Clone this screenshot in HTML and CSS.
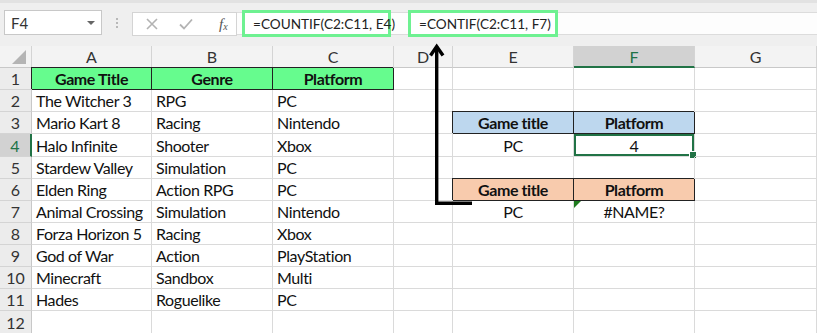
FILE: index.html
```html
<!DOCTYPE html>
<html>
<head>
<meta charset="utf-8">
<link rel="stylesheet" href="styles.css">
</head>
<body>
<div class="app">
  <div class="toolbar">
    <div class="namebox"><span class="nb-text">F4</span><span class="caret"></span></div>
    <div class="dots"><span></span><span></span><span></span></div>
    <div class="fxbox">
      <svg class="ic" width="14" height="14" viewBox="0 0 14 14"><path d="M2 2 L12 12 M12 2 L2 12" stroke="#b3b3b3" stroke-width="1.6" fill="none"/></svg>
      <svg class="ic" width="16" height="14" viewBox="0 0 16 14"><path d="M2 7.5 L6 11.5 L14 2.5" stroke="#b3b3b3" stroke-width="1.8" fill="none"/></svg>
      <span class="fx">f<sub>x</sub></span>
    </div>
    <div class="formula">
      <div class="hl">=COUNTIF(C2:C11, E4)</div>
      <div class="hl hl2">=CONTIF(C2:C11, F7)</div>
    </div>
  </div>

  <div class="sheet">
    <div class="h corner"><svg width="14" height="14" viewBox="0 0 14 14"><polygon points="14,0 14,14 0,14" fill="#b4b4b4"/></svg></div>
    <div class="h">A</div><div class="h">B</div><div class="h">C</div><div class="h">D</div><div class="h">E</div><div class="h hsel">F</div><div class="h">G</div>

    <div class="r">1</div>
    <div class="c b ctr hd-green bx">Game Title</div><div class="c b ctr hd-green bx">Genre</div><div class="c b ctr hd-green bx">Platform</div><div class="c"></div><div class="c"></div><div class="c"></div><div class="c"></div>

    <div class="r">2</div>
    <div class="c">The Witcher 3</div><div class="c">RPG</div><div class="c">PC</div><div class="c"></div><div class="c"></div><div class="c"></div><div class="c"></div>

    <div class="r">3</div>
    <div class="c">Mario Kart 8</div><div class="c">Racing</div><div class="c">Nintendo</div><div class="c"></div><div class="c b ctr hd-blue bx">Game title</div><div class="c b ctr hd-blue bx">Platform</div><div class="c"></div>

    <div class="r rsel">4</div>
    <div class="c">Halo Infinite</div><div class="c">Shooter</div><div class="c">Xbox</div><div class="c"></div><div class="c ctr">PC</div><div class="c ctr sel">4</div><div class="c"></div>

    <div class="r">5</div>
    <div class="c">Stardew Valley</div><div class="c">Simulation</div><div class="c">PC</div><div class="c"></div><div class="c"></div><div class="c"></div><div class="c"></div>

    <div class="r">6</div>
    <div class="c">Elden Ring</div><div class="c">Action RPG</div><div class="c">PC</div><div class="c"></div><div class="c b ctr hd-orange bx">Game title</div><div class="c b ctr hd-orange bx">Platform</div><div class="c"></div>

    <div class="r">7</div>
    <div class="c">Animal Crossing</div><div class="c">Simulation</div><div class="c">Nintendo</div><div class="c"></div><div class="c ctr">PC</div><div class="c ctr err">#NAME?</div><div class="c"></div>

    <div class="r">8</div>
    <div class="c">Forza Horizon 5</div><div class="c">Racing</div><div class="c">Xbox</div><div class="c"></div><div class="c"></div><div class="c"></div><div class="c"></div>

    <div class="r">9</div>
    <div class="c">God of War</div><div class="c">Action</div><div class="c">PlayStation</div><div class="c"></div><div class="c"></div><div class="c"></div><div class="c"></div>

    <div class="r">10</div>
    <div class="c">Minecraft</div><div class="c">Sandbox</div><div class="c">Multi</div><div class="c"></div><div class="c"></div><div class="c"></div><div class="c"></div>

    <div class="r">11</div>
    <div class="c">Hades</div><div class="c">Roguelike</div><div class="c">PC</div><div class="c"></div><div class="c"></div><div class="c"></div><div class="c"></div>

    <div class="r">12</div>
    <div class="c"></div><div class="c"></div><div class="c"></div><div class="c"></div><div class="c"></div><div class="c"></div><div class="c"></div>
  </div>

  <svg class="arrow" width="817" height="333" viewBox="0 0 817 333">
    <path d="M436.7 205 V46.5" stroke="#000" stroke-width="3.4" fill="none"/>
    <path d="M430.5 55.5 L436.7 46.5 L443 55.5" stroke="#000" stroke-width="3.4" fill="none" stroke-linejoin="miter"/>
    <path d="M435 203.3 H472" stroke="#000" stroke-width="3.4" fill="none"/>
  </svg>
</div>
</body>
</html>
```

FILE: styles.css
```css
* { box-sizing: border-box; }
html, body { margin: 0; padding: 0; }
body { width: 817px; height: 333px; overflow: hidden; background: #fff; font-family: Lato, "Open Sans", sans-serif; }

.app { position: relative; width: 817px; height: 333px; overflow: hidden; }

.toolbar {
  height: 46px;
  background: #efefef;
  border-top: 3px solid #e2e2e2;
  display: flex;
  align-items: flex-start;
  padding-top: 7px;
}
.namebox {
  margin-left: 4px;
  width: 98px;
  height: 25px;
  background: #fff;
  border: 1px solid #c8c8c8;
  display: flex;
  align-items: center;
  justify-content: space-between;
  padding: 0 6px 0 6px;
  font-size: 15px;
  color: #333;
}
.caret {
  width: 0; height: 0;
  border-left: 4px solid transparent;
  border-right: 4px solid transparent;
  border-top: 4px solid #666;
}
.dots {
  width: 30px;
  height: 25px;
  display: flex;
  flex-direction: column;
  align-items: center;
  justify-content: center;
  gap: 2px;
}
.dots span { width: 2px; height: 2px; background: #b8b8b8; display: block; }
.fxbox {
  margin-top: 2px;
  width: 105px;
  height: 24px;
  background: #fff;
  border: 1px solid #d4d4d4;
  display: flex;
  align-items: center;
  padding-left: 12px;
  gap: 19px;
}
.fx { font-family: "Liberation Serif", serif; font-style: italic; font-size: 15px; color: #555; margin-left: 6px; }
.fx sub { font-size: 10px; vertical-align: -1px; }
.formula {
  margin-top: 2px;
  flex: 1;
  height: 23px;
  background: #fdfdfd;
  border-top: 1px solid #dcdcdc;
  border-bottom: 1px solid #dcdcdc;
  display: flex;
  align-items: center;
  padding-left: 5px;
}
.hl {
  width: 149px;
  height: 27px;
  flex: none;
  border: 3px solid #6ef191;
  background: #fff;
  font-size: 13.6px;
  color: #222;
  padding-left: 8px;
  display: flex;
  align-items: center;
  white-space: nowrap;
}
.hl2 { margin-left: 17px; width: 150px; }

.sheet {
  display: grid;
  grid-template-columns: 32px 120px 121px 121px 59px 121px 121px 122px;
  grid-template-rows: 22px repeat(12, 22.13px);
}
.h {
  background: #f3f3f3;
  border-right: 1px solid #d4d4d4;
  border-bottom: 1px solid #c8c8c8;
  display: flex;
  align-items: center;
  justify-content: center;
  font-size: 16px;
  color: #333;
}
.corner { justify-content: flex-end; align-items: flex-end; padding: 0 5px 3px 0; }
.hsel { background: #d2d2d2; border-bottom: 2px solid #217346; color: #217346; }
.r {
  background: #ececec;
  border-right: 1px solid #c8c8c8;
  border-bottom: 1px solid #d4d4d4;
  display: flex;
  align-items: flex-end;
  justify-content: center;
  font-size: 16px;
  line-height: 20px;
  color: #333;
}
.rsel { background: #d2d2d2; border-right: 2px solid #217346; color: #217346; }
.c {
  position: relative;
  border-right: 1px solid #dadada;
  border-bottom: 1px solid #dadada;
  display: flex;
  align-items: flex-end;
  padding: 0 4px;
  font-size: 16px;
  letter-spacing: -0.4px;
  line-height: 20px;
  color: #111;
  white-space: nowrap;
}
.ctr { justify-content: center; }
.b { font-weight: bold; }
.bx { border-right-color: #222; border-bottom-color: #222; box-shadow: -1px -1px 0 #222; }
.hd-green { background: #66fc8e; }
.hd-blue { background: #bdd7ee; }
.hd-orange { background: #f8cbad; }
.sel { box-shadow: inset 0 0 0 2px #217346; }
.sel::after {
  content: "";
  position: absolute;
  right: -3px;
  bottom: -3px;
  width: 6px;
  height: 6px;
  background: #217346;
  border: 1px solid #fff;
}
.err::before {
  content: "";
  position: absolute;
  left: 0;
  top: 0;
  border-top: 7px solid #1e7b1e;
  border-right: 7px solid transparent;
}

.arrow { position: absolute; left: 0; top: 0; pointer-events: none; }
```
